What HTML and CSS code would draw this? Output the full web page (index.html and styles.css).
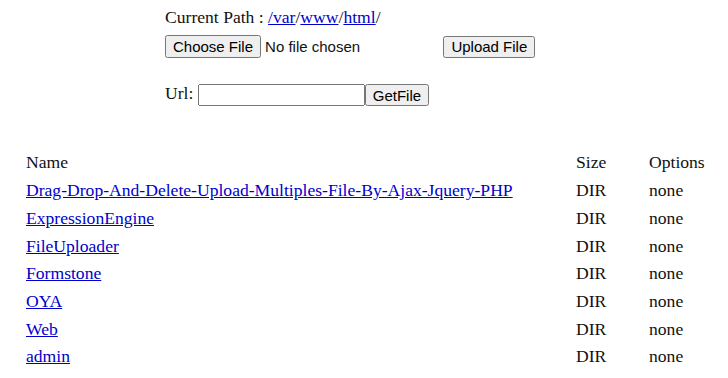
FILE: index.html
```html
<!DOCTYPE html>
<html lang="en">
<head>
  <meta charset="UTF-8" />
  <title>File Manager</title>
  <link rel="stylesheet" href="styles.css">
</head>
<body>

  <div class="toolbar">
    <div class="path">
      Current Path : <a href="#">/var</a>/<a href="#">www</a>/<a href="#">html</a>/
    </div>
    <form class="upload" onsubmit="return false">
      <input type="file" name="file" class="file-input">
      <input type="submit" value="Upload File" class="btn">
    </form>
    <form class="fetch" onsubmit="return false">
      Url: <input type="text" name="url" class="url-input"><input type="submit" value="GetFile" class="btn">
    </form>
  </div>

  <table class="files">
    <tr>
      <td class="name">Name</td>
      <td class="size">Size</td>
      <td class="opts">Options</td>
    </tr>
    <tr><td class="name"><a href="#">Drag-Drop-And-Delete-Upload-Multiples-File-By-Ajax-Jquery-PHP</a></td><td class="size">DIR</td><td class="opts">none</td></tr>
    <tr><td class="name"><a href="#">ExpressionEngine</a></td><td class="size">DIR</td><td class="opts">none</td></tr>
    <tr><td class="name"><a href="#">FileUploader</a></td><td class="size">DIR</td><td class="opts">none</td></tr>
    <tr><td class="name"><a href="#">Formstone</a></td><td class="size">DIR</td><td class="opts">none</td></tr>
    <tr><td class="name"><a href="#">OYA</a></td><td class="size">DIR</td><td class="opts">none</td></tr>
    <tr><td class="name"><a href="#">Web</a></td><td class="size">DIR</td><td class="opts">none</td></tr>
    <tr><td class="name"><a href="#">admin</a></td><td class="size">DIR</td><td class="opts">none</td></tr>
    <tr><td class="name"><a href="#">assets</a></td><td class="size">DIR</td><td class="opts">none</td></tr>
  </table>

</body>
</html>
```

FILE: styles.css
```css
body {
  margin: 0;
  font-family: 'Liberation Serif', 'Times New Roman', serif;
  font-size: 17.6px;
  color: #111;
  background: #fff;
}
a { color: #0000cc; }

.toolbar {
  padding: 6px 0 0 165px;
}
.path {
  line-height: 22px;
}
.upload {
  margin: 7px 0 0;
}
.fetch {
  margin: 25px 0 0;
}
.btn, .file-input, .url-input {
  font-family: 'Liberation Sans', Arial, sans-serif;
  font-size: 15px;
  vertical-align: middle;
}
.file-input {
  width: 274px;
}
.url-input {
  width: 167px;
  height: 22px;
  box-sizing: border-box;
}
.btn {
  height: 22px;
  padding: 0 6px;
}

.files {
  margin: 43px 0 0 22px;
  border-spacing: 0;
  width: 692px;
}
.files td {
  padding: 4px 4px;
  line-height: 19.7px;
}
.size { width: 65px; }
.opts { width: 61px; }
```
